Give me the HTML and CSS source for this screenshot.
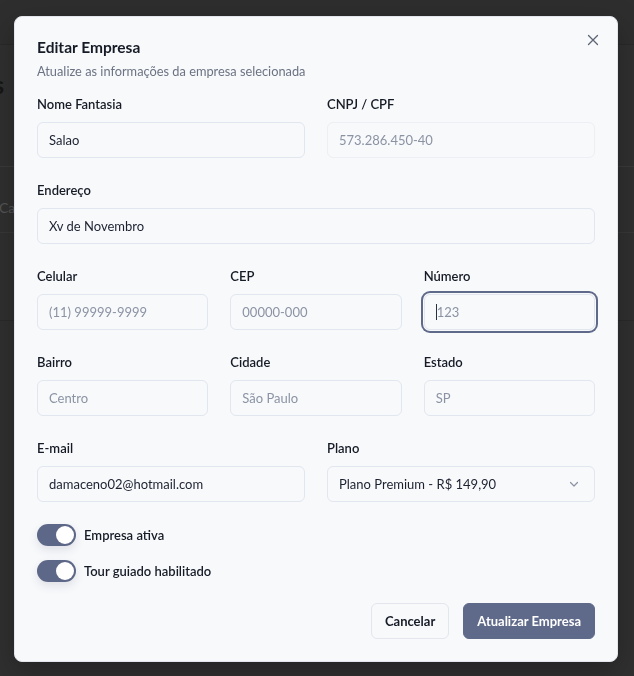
FILE: index.html
```html
<!DOCTYPE html>
<html lang="pt-BR">
<head>
<meta charset="utf-8">
<title>Editar Empresa</title>
<link rel="stylesheet" href="styles.css">
</head>
<body>
<div class="page">
  <div class="page-top"></div>
  <div class="page-head"><div class="page-title"><span>Empresas</span></div></div>
  <div class="page-row"><span class="page-cell">Ca</span></div>
  <div class="page-row page-row-tall"></div>
</div>

<div class="overlay">
  <div class="modal">
    <button class="close" aria-label="Fechar">
      <svg width="12" height="12" viewBox="0 0 12 12"><path d="M1.5 1.5 L10.5 10.5 M10.5 1.5 L1.5 10.5" stroke="currentColor" stroke-width="1.3" stroke-linecap="round"/></svg>
    </button>
    <h2 class="title">Editar Empresa</h2>
    <p class="subtitle">Atualize as informações da empresa selecionada</p>

    <div class="form">
      <div class="row cols-2">
        <div class="field">
          <label class="label">Nome Fantasia</label>
          <input class="input" value="Salao">
        </div>
        <div class="field">
          <label class="label">CNPJ / CPF</label>
          <input class="input input-disabled" value="573.286.450-40" disabled>
        </div>
      </div>

      <div class="row">
        <div class="field">
          <label class="label">Endereço</label>
          <input class="input" value="Xv de Novembro">
        </div>
      </div>

      <div class="row cols-3">
        <div class="field">
          <label class="label">Celular</label>
          <input class="input" placeholder="(11) 99999-9999">
        </div>
        <div class="field">
          <label class="label">CEP</label>
          <input class="input" placeholder="00000-000">
        </div>
        <div class="field">
          <label class="label">Número</label>
          <div class="input-wrap">
            <input class="input input-focus" placeholder="123">
            <span class="caret"></span>
          </div>
        </div>
      </div>

      <div class="row cols-3">
        <div class="field">
          <label class="label">Bairro</label>
          <input class="input" placeholder="Centro">
        </div>
        <div class="field">
          <label class="label">Cidade</label>
          <input class="input" placeholder="São Paulo">
        </div>
        <div class="field">
          <label class="label">Estado</label>
          <input class="input" placeholder="SP">
        </div>
      </div>

      <div class="row cols-2">
        <div class="field">
          <label class="label">E-mail</label>
          <input class="input" value="damaceno02@hotmail.com">
        </div>
        <div class="field">
          <label class="label">Plano</label>
          <div class="input select">
            <span>Plano Premium - R$ 149,90</span>
            <svg class="chev" width="12" height="12" viewBox="0 0 12 12"><path d="M2.5 4.5 L6 8 L9.5 4.5" fill="none" stroke="currentColor" stroke-width="1.2" stroke-linecap="round" stroke-linejoin="round"/></svg>
          </div>
        </div>
      </div>
    </div>

    <div class="switches">
      <div class="switch-row">
        <span class="switch"><span class="thumb"></span></span>
        <span class="switch-label">Empresa ativa</span>
      </div>
      <div class="switch-row">
        <span class="switch"><span class="thumb"></span></span>
        <span class="switch-label">Tour guiado habilitado</span>
      </div>
    </div>

    <div class="actions">
      <button class="btn btn-outline">Cancelar</button>
      <button class="btn btn-primary">Atualizar Empresa</button>
    </div>
  </div>
</div>
</body>
</html>
```

FILE: styles.css
```css
* { box-sizing: border-box; }

html, body {
  margin: 0;
  height: 100%;
}

body {
  background: #303030;
  font-family: Lato, "Noto Sans", sans-serif;
  overflow: hidden;
}

/* dimmed page behind the dialog */
.page {
  width: 100%;
}
.page-top {
  height: 45px;
  background: #2e2e2e;
  border-bottom: 1px solid #292929;
}
.page-head {
  height: 122px;
  border-bottom: 1px solid #3a3a3a;
  padding-top: 26px;
}
.page-title {
  width: 4px;
  display: flex;
  justify-content: flex-end;
  white-space: nowrap;
  font-size: 24px;
  font-weight: 700;
  color: #161616;
  line-height: 28px;
}
.page-row {
  height: 66px;
  border-bottom: 1px solid #383838;
}
.page-row-tall {
  height: 88px;
  border-bottom: 1px solid #2a2a2a;
}
.page-cell {
  display: block;
  margin-left: -1px;
  padding-top: 32px;
  font-size: 14px;
  color: #555;
}

/* overlay */
.overlay {
  position: fixed;
  inset: 0;
  padding: 16px 0 0 14px;
}

.modal {
  position: relative;
  width: 604px;
  background: #f8f9fb;
  border: 1px solid #e3e6ec;
  border-radius: 8px;
  padding: 19px 22px 22px 22px;
  box-shadow: 0 10px 30px rgba(0, 0, 0, 0.25);
}

.close {
  position: absolute;
  top: 14px;
  right: 15px;
  width: 18px;
  height: 18px;
  padding: 0;
  border: 0;
  background: transparent;
  color: #5d6473;
  display: flex;
  align-items: center;
  justify-content: center;
}

.title {
  margin: 0;
  font-size: 15.5px;
  line-height: 22px;
  font-weight: 700;
  color: #161b26;
}

.subtitle {
  margin: 3px 0 0;
  font-size: 12.8px;
  line-height: 20px;
  color: #6b7383;
}

.form {
  margin-top: 13px;
  display: flex;
  flex-direction: column;
  gap: 22px;
}

.row {
  display: grid;
  grid-template-columns: 1fr;
  gap: 22px;
}
.cols-2 { grid-template-columns: 1fr 1fr; }
.cols-3 { grid-template-columns: 1fr 1fr 1fr; }

.field {
  display: flex;
  flex-direction: column;
  gap: 8px;
}

.label {
  font-size: 13px;
  line-height: 20px;
  font-weight: 600;
  color: #161b26;
}

.input {
  height: 36px;
  width: 100%;
  padding: 0 11px;
  font-family: inherit;
  font-size: 13px;
  color: #1c2130;
  background: #f8f9fb;
  border: 1px solid #e1e6ef;
  border-radius: 6px;
  outline: none;
}
.input::placeholder { color: #8b93a3; }
.input-disabled {
  color: #8b93a3;
  background: #f8f9fb;
  border-color: #eceff4;
}

.input-wrap { position: relative; }
.input-focus {
  box-shadow: 0 0 0 1px #f8f9fb, 0 0 0 3px #5f6a8a;
  padding-left: 12px;
}
.caret {
  position: absolute;
  left: 12px;
  top: 10px;
  width: 1px;
  height: 16px;
  background: #2a3040;
}

.select {
  display: flex;
  align-items: center;
  justify-content: space-between;
  padding-right: 14px;
}
.chev { color: #8b93a3; }

.switches {
  margin-top: 22px;
  display: flex;
  flex-direction: column;
  gap: 14px;
}
.switch-row {
  display: flex;
  align-items: center;
  gap: 8px;
}
.switch {
  width: 39px;
  height: 22px;
  border-radius: 11px;
  background: #5d6888;
  padding: 2px;
  display: flex;
  justify-content: flex-end;
  box-shadow: 0 4px 10px rgba(40, 50, 80, 0.12);
}
.thumb {
  width: 18px;
  height: 18px;
  border-radius: 50%;
  background: #fff;
}
.switch-label {
  font-size: 13px;
  line-height: 20px;
  font-weight: 600;
  color: #161b26;
}

.actions {
  margin-top: 21px;
  display: flex;
  justify-content: flex-end;
  gap: 14px;
}
.btn {
  height: 36px;
  border-radius: 6px;
  font-family: inherit;
  font-size: 13px;
  font-weight: 700;
  padding: 0 13px;
}
.btn-outline {
  background: #f8f9fb;
  border: 1px solid #e3e6ec;
  color: #161b26;
}
.btn-primary {
  background: #5f6a8a;
  border: 1px solid #5f6a8a;
  color: #ffffff;
}
```
